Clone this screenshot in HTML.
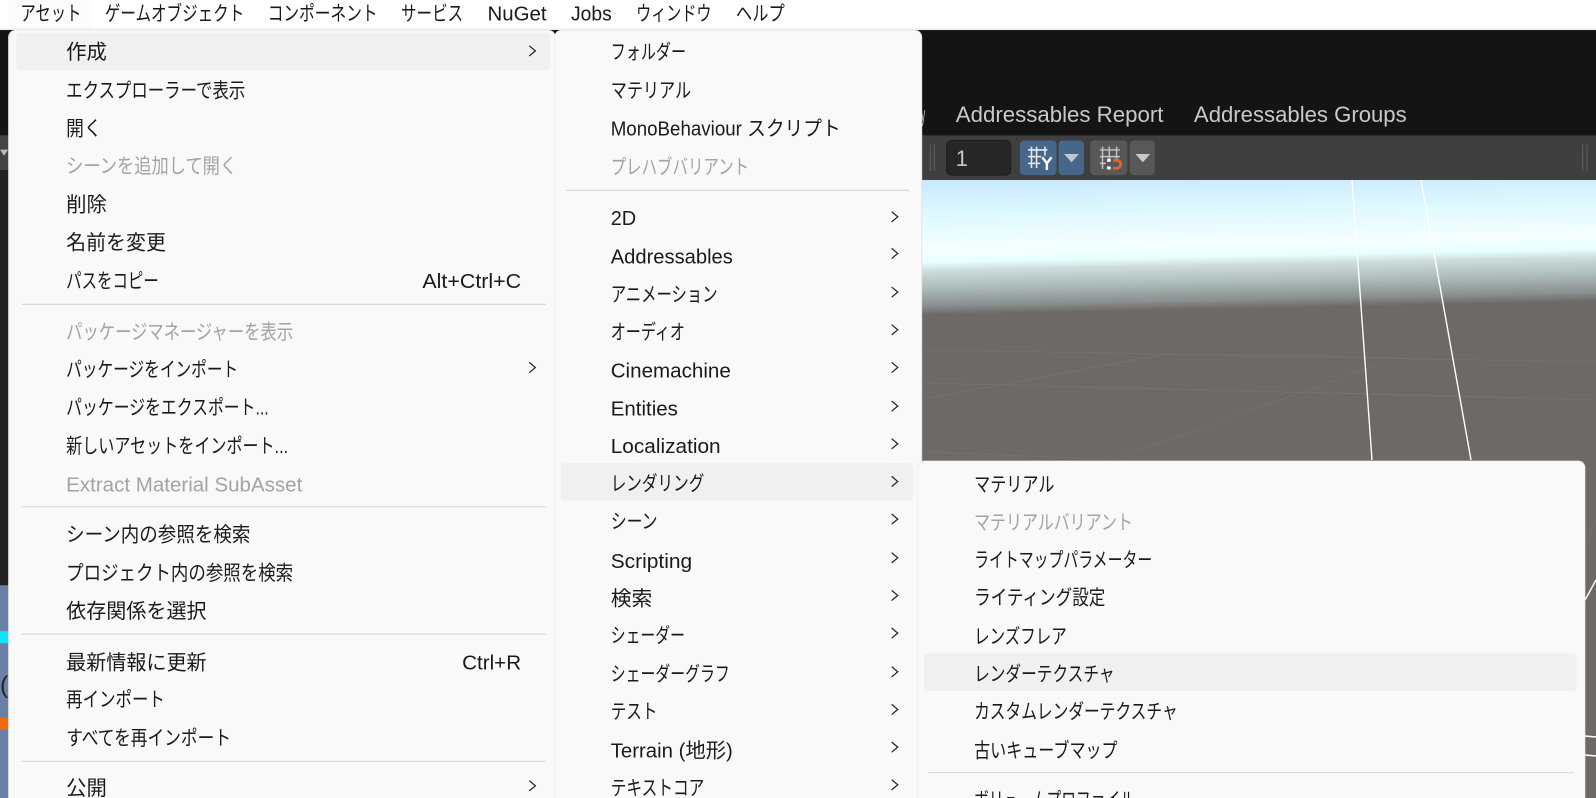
<!DOCTYPE html>
<html lang="ja"><head><meta charset="utf-8"><title>Menu</title>
<style>
html,body{margin:0;padding:0;width:1596px;height:798px;overflow:hidden;background:#141414}
svg{display:block}
text{font-family:"Liberation Sans","Noto Sans CJK JP",sans-serif;font-size:20px;fill:#1a1a1a;transform:translateY(1px)}
.d{fill:#a3a3a3}
.c{fill:none;stroke:#222;stroke-width:1.2}
.s{stroke:#d9d9d9;stroke-width:1.2}
.t{fill:#c9c9c9;font-size:21.5px;transform:none}
</style></head><body>
<svg xmlns="http://www.w3.org/2000/svg" width="1596" height="798" viewBox="0 0 1596 798">
<defs>
<linearGradient id="sky" gradientUnits="userSpaceOnUse" x1="922" y1="180" x2="924.700" y2="315">
<stop offset="0" stop-color="#c8e8fd"/><stop offset=".26" stop-color="#def8ff"/><stop offset=".52" stop-color="#f5ffff"/><stop offset=".61" stop-color="#e8ffff"/><stop offset=".67" stop-color="#cfdedd"/><stop offset=".81" stop-color="#aab8b6"/><stop offset=".93" stop-color="#8a9090"/><stop offset="1" stop-color="#6d6966"/>
</linearGradient>
</defs>
<g transform="scale(1.01786)">
<!-- background -->
<rect x="0" y="0" width="1568" height="784" fill="#141414"/>
<rect x="0" y="133" width="1568" height="44" fill="#3f3f3f"/>
<rect x="0" y="167" width="10" height="408" fill="#232323"/>
<rect x="0" y="133" width="10" height="34" fill="#444"/>
<path d="M0 147h8l-4 6z" fill="#bbb"/>
<rect x="0" y="575" width="10" height="209" fill="#6a80a6"/>
<rect x="0" y="620" width="10" height="12" fill="#10e4f8"/>
<rect x="0" y="705" width="10" height="12" fill="#f06a10"/>
<text x="0" y="680" style="font-size:24px;fill:#222">(</text>
</g>
<!-- scene -->
<rect x="900" y="180" width="696" height="618" fill="url(#sky)"/>
<g fill="none" stroke="#77736f" stroke-width=".8">
<path d="M925 399L1172 353M925 383L1405 395M1115 459L1378 365M925 452L1105 459M925 350L1405 358M1365 358L1596 362M1340 393L1596 400M1585 545L1596 520"/>
</g>
<g fill="none" stroke="#fff" stroke-width="1.4">
<path d="M1352 180L1372 460M1421 180L1471 460M1585 600L1596 580M1585 736L1596 737M1585 755L1596 756"/>
</g>
<g transform="scale(1.01786)">
<!-- tabs -->
<text class="t" x="905" y="120" textLength="4" lengthAdjust="spacingAndGlyphs">y</text>
<text class="t" x="939" y="120" textLength="204" lengthAdjust="spacingAndGlyphs">Addressables Report</text>
<text class="t" x="1173" y="120" textLength="209" lengthAdjust="spacingAndGlyphs">Addressables Groups</text>
<!-- toolbar -->
<path d="M914 142v26M918 142v26M1555 142v26M1559 142v26" stroke="#5a5a5a" stroke-width="1.2"/>
<rect x="930" y="138" width="63" height="34" rx="5" fill="#262626" stroke="#1c1c1c"/>
<text class="t" x="939" y="163" style="fill:#c8c8c8">1</text>
<rect x="1002" y="138" width="36" height="34" rx="4" fill="#46678a"/>
<rect x="1040" y="138" width="25" height="34" rx="4" fill="#46678a"/>
<path d="M1045.500 151.300h14.500l-7.250 8.200z" fill="#c4c8cc"/>
<path d="M1010 147.300h19M1010 153.900h13M1010 160.500h12M1013.400 144v21M1018.400 144v21M1026.600 144v9" stroke="#e4eaf0" stroke-width="1.500" fill="none"/>
<path d="M1024 154.500l4.500 6 4.500-6M1028.500 160v7" stroke="#fff" stroke-width="2.400" fill="none"/>
<rect x="1071" y="138" width="36.500" height="34" rx="4" fill="#585858"/>
<rect x="1110" y="138" width="24.500" height="34" rx="4" fill="#585858"/>
<path d="M1115.500 151.300h14.500l-7.250 8.200z" fill="#c8c8c8"/>
<path d="M1080.600 147.300h19.600M1080.600 153.900h19.600M1080.600 160.500h6M1083.200 144v22M1089.800 144v12M1097 144v12" stroke="#c4c4c4" stroke-width="1.400" fill="none"/>
<path d="M1093.500 157.500h4a3.900 3.900 0 0 1 3.500 3.900 3.900 3.900 0 0 1-3.500 3.900h-4" stroke="#e8622c" stroke-width="2.800" fill="none"/>
<rect x="1087.700" y="156" width="3.500" height="3" fill="#fff"/><rect x="1087.700" y="163.500" width="3.500" height="3" fill="#fff"/>

<!-- menu bar -->
<rect x="0" y="0" width="1568" height="28.500" fill="#fff"/>
<rect x="0" y="28" width="1568" height="1.500" fill="#ececec"/>
<rect x="9" y="0" width="82" height="28" fill="#fcfcfc"/>
<g>
<text x="20" y="19" textLength="60" lengthAdjust="spacingAndGlyphs">アセット</text>
<text x="103" y="19" textLength="137" lengthAdjust="spacingAndGlyphs">ゲームオブジェクト</text>
<text x="263" y="19" textLength="108" lengthAdjust="spacingAndGlyphs">コンポーネント</text>
<text x="394" y="19" textLength="61" lengthAdjust="spacingAndGlyphs">サービス</text>
<text x="479" y="19" textLength="58" lengthAdjust="spacingAndGlyphs">NuGet</text>
<text x="561" y="19" textLength="40" lengthAdjust="spacingAndGlyphs">Jobs</text>
<text x="625" y="19" textLength="74" lengthAdjust="spacingAndGlyphs">ウィンドウ</text>
<text x="723" y="19" textLength="48" lengthAdjust="spacingAndGlyphs">ヘルプ</text>
</g>

<!-- menu 1 -->
<rect x="8" y="29.500" width="538" height="770" rx="7" fill="#e6e6e6"/>
<rect x="9" y="30" width="536" height="770" rx="7" fill="#f9f9f9"/>
<rect x="16" y="32" width="525" height="37" rx="4" fill="#f0f0f0"/>
<g>
<text x="65" y="57" textLength="40" lengthAdjust="spacingAndGlyphs">作成</text>
<text x="65" y="95" textLength="176" lengthAdjust="spacingAndGlyphs">エクスプローラーで表示</text>
<text x="65" y="132" textLength="35" lengthAdjust="spacingAndGlyphs">開く</text>
<text class="d" x="65" y="169" textLength="168" lengthAdjust="spacingAndGlyphs">シーンを追加して開く</text>
<text x="65" y="207" textLength="40" lengthAdjust="spacingAndGlyphs">削除</text>
<text x="65" y="244" textLength="98" lengthAdjust="spacingAndGlyphs">名前を変更</text>
<text x="65" y="282" textLength="91" lengthAdjust="spacingAndGlyphs">パスをコピー</text>
<text x="415" y="282" textLength="97" lengthAdjust="spacingAndGlyphs">Alt+Ctrl+C</text>
<text class="d" x="65" y="332" textLength="223" lengthAdjust="spacingAndGlyphs">パッケージマネージャーを表示</text>
<text x="65" y="369" textLength="169" lengthAdjust="spacingAndGlyphs">パッケージをインポート</text>
<text x="65" y="406" textLength="199" lengthAdjust="spacingAndGlyphs">パッケージをエクスポート...</text>
<text x="65" y="444" textLength="218" lengthAdjust="spacingAndGlyphs">新しいアセットをインポート...</text>
<text class="d" x="65" y="482" textLength="232" lengthAdjust="spacingAndGlyphs">Extract Material SubAsset</text>
<text x="65" y="531" textLength="181" lengthAdjust="spacingAndGlyphs">シーン内の参照を検索</text>
<text x="65" y="569" textLength="223" lengthAdjust="spacingAndGlyphs">プロジェクト内の参照を検索</text>
<text x="65" y="606" textLength="138" lengthAdjust="spacingAndGlyphs">依存関係を選択</text>
<text x="65" y="657" textLength="138" lengthAdjust="spacingAndGlyphs">最新情報に更新</text>
<text x="454" y="657" textLength="58" lengthAdjust="spacingAndGlyphs">Ctrl+R</text>
<text x="65" y="693" textLength="97" lengthAdjust="spacingAndGlyphs">再インポート</text>
<text x="65" y="731" textLength="162" lengthAdjust="spacingAndGlyphs">すべてを再インポート</text>
<text x="65" y="780" textLength="40" lengthAdjust="spacingAndGlyphs">公開</text>
</g>
<path class="s" d="M21 299H536M21 498H536M21 623H536M21 748H536"/>
<path class="c" d="M520 45l6 5-6 5M520 356l6 5-6 5M520 767l6 5-6 5"/>

<!-- menu 2 -->
<rect x="544.500" y="29.500" width="361.500" height="770" rx="7" fill="#e6e6e6"/>
<rect x="545" y="30" width="360" height="770" rx="7" fill="#f9f9f9"/>
<rect x="551" y="455" width="346" height="37" rx="4" fill="#f0f0f0"/>
<g>
<text x="600" y="57" textLength="74" lengthAdjust="spacingAndGlyphs">フォルダー</text>
<text x="600" y="95" textLength="79" lengthAdjust="spacingAndGlyphs">マテリアル</text>
<text x="600" y="132" textLength="226" lengthAdjust="spacingAndGlyphs">MonoBehaviour スクリプト</text>
<text class="d" x="600" y="170" textLength="136" lengthAdjust="spacingAndGlyphs">プレハブバリアント</text>
<text x="600" y="220" textLength="25" lengthAdjust="spacingAndGlyphs">2D</text>
<text x="600" y="258" textLength="120" lengthAdjust="spacingAndGlyphs">Addressables</text>
<text x="600" y="295" textLength="105" lengthAdjust="spacingAndGlyphs">アニメーション</text>
<text x="600" y="332" textLength="73" lengthAdjust="spacingAndGlyphs">オーディオ</text>
<text x="600" y="370" textLength="118" lengthAdjust="spacingAndGlyphs">Cinemachine</text>
<text x="600" y="407" textLength="66" lengthAdjust="spacingAndGlyphs">Entities</text>
<text x="600" y="444" textLength="108" lengthAdjust="spacingAndGlyphs">Localization</text>
<text x="600" y="481" textLength="92" lengthAdjust="spacingAndGlyphs">レンダリング</text>
<text x="600" y="518" textLength="46" lengthAdjust="spacingAndGlyphs">シーン</text>
<text x="600" y="557" textLength="80" lengthAdjust="spacingAndGlyphs">Scripting</text>
<text x="600" y="594" textLength="41" lengthAdjust="spacingAndGlyphs">検索</text>
<text x="600" y="630" textLength="73" lengthAdjust="spacingAndGlyphs">シェーダー</text>
<text x="600" y="668" textLength="117" lengthAdjust="spacingAndGlyphs">シェーダーグラフ</text>
<text x="600" y="705" textLength="46" lengthAdjust="spacingAndGlyphs">テスト</text>
<text x="600" y="743" textLength="120" lengthAdjust="spacingAndGlyphs">Terrain (地形)</text>
<text x="600" y="780" textLength="92" lengthAdjust="spacingAndGlyphs">テキストコア</text>
</g>
<path class="s" d="M556 187H893"/>
<path class="c" d="M876 208l6 5-6 5M876 244l6 5-6 5M876 282l6 5-6 5M876 319l6 5-6 5M876 356l6 5-6 5M876 394l6 5-6 5M876 431l6 5-6 5M876 468l6 5-6 5M876 505l6 5-6 5M876 543l6 5-6 5M876 580l6 5-6 5M876 617l6 5-6 5M876 655l6 5-6 5M876 692l6 5-6 5M876 729l6 5-6 5M876 766l6 5-6 5"/>

<!-- menu 3 -->
<rect x="901.500" y="452.500" width="656" height="350" rx="7" fill="#e6e6e6"/>
<rect x="902" y="453" width="655" height="350" rx="7" fill="#f9f9f9"/>
<rect x="908" y="642" width="641" height="37" rx="4" fill="#f0f0f0"/>
<g>
<text x="957" y="482" textLength="79" lengthAdjust="spacingAndGlyphs">マテリアル</text>
<text class="d" x="957" y="519" textLength="156" lengthAdjust="spacingAndGlyphs">マテリアルバリアント</text>
<text x="957" y="556" textLength="175" lengthAdjust="spacingAndGlyphs">ライトマップパラメーター</text>
<text x="957" y="593" textLength="129" lengthAdjust="spacingAndGlyphs">ライティング設定</text>
<text x="957" y="631" textLength="91" lengthAdjust="spacingAndGlyphs">レンズフレア</text>
<text x="957" y="668" textLength="138" lengthAdjust="spacingAndGlyphs">レンダーテクスチャ</text>
<text x="957" y="705" textLength="200" lengthAdjust="spacingAndGlyphs">カスタムレンダーテクスチャ</text>
<text x="957" y="743" textLength="141" lengthAdjust="spacingAndGlyphs">古いキューブマップ</text>
<text x="957" y="792" textLength="158" lengthAdjust="spacingAndGlyphs">ボリュームプロファイル</text>
</g>
<path class="s" d="M912 759H1546"/>
</g>
</svg>
</body></html>
